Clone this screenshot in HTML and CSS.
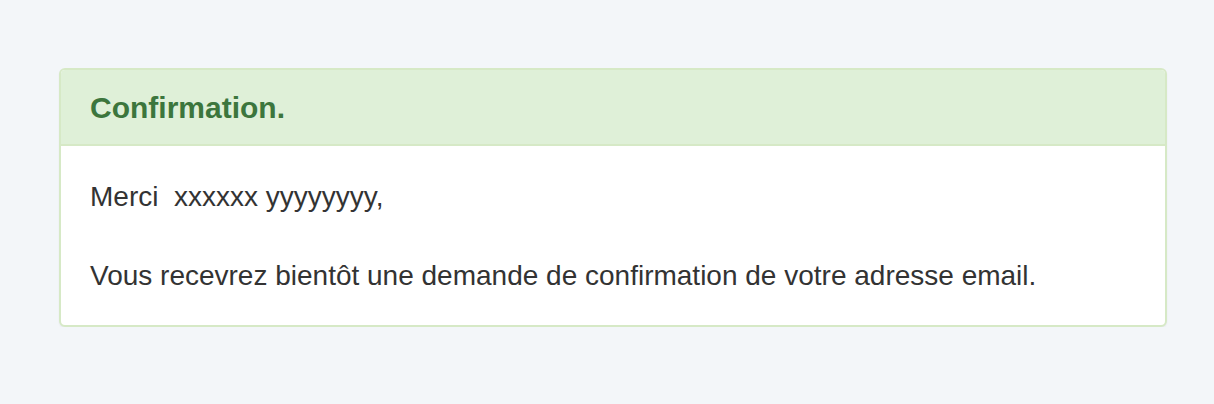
FILE: index.html
```html
<!DOCTYPE html>
<html lang="fr">
<head>
    <meta charset="UTF-8">
    <meta name="viewport" content="width=device-width, initial-scale=1.0">
    <title>Confirmation</title>
    <link rel="stylesheet" href="styles.css">
</head>
<body>
    <div class="page">
        <div class="panel panel-success">
            <div class="panel-heading">
                <h3 class="panel-title">Confirmation.</h3>
            </div>
            <div class="panel-body">
                <p>Merci&nbsp; xxxxxx yyyyyyyy,</p>
                <p>Vous recevrez bientôt une demande de confirmation de votre adresse email.</p>
            </div>
        </div>
    </div>
</body>
</html>
```

FILE: styles.css
```css
body {
    margin: 0;
    background-color: #f3f6f9;
    font-family: "Liberation Sans", Arial, sans-serif;
    color: #333;
}

.page {
    padding: 68px 47px 0 59px;
}

.panel {
    background-color: #fff;
    border: 2px solid #d6e9c6;
    border-radius: 6px;
    box-shadow: 0 1px 2px rgba(0, 0, 0, 0.05);
}

.panel-heading {
    background-color: #dff0d8;
    border-bottom: 2px solid #d6e9c6;
    border-radius: 4px 4px 0 0;
    padding: 21px 29px 20px;
}

.panel-title {
    margin: 0;
    font-size: 30px;
    line-height: 33px;
    font-weight: bold;
    color: #3c763d;
}

.panel-body {
    padding: 31px 29px 29px;
}

.panel-body p {
    margin: 0 0 39px;
    font-size: 28px;
    line-height: 40px;
}

.panel-body p:last-child {
    margin-bottom: 0;
}
```
